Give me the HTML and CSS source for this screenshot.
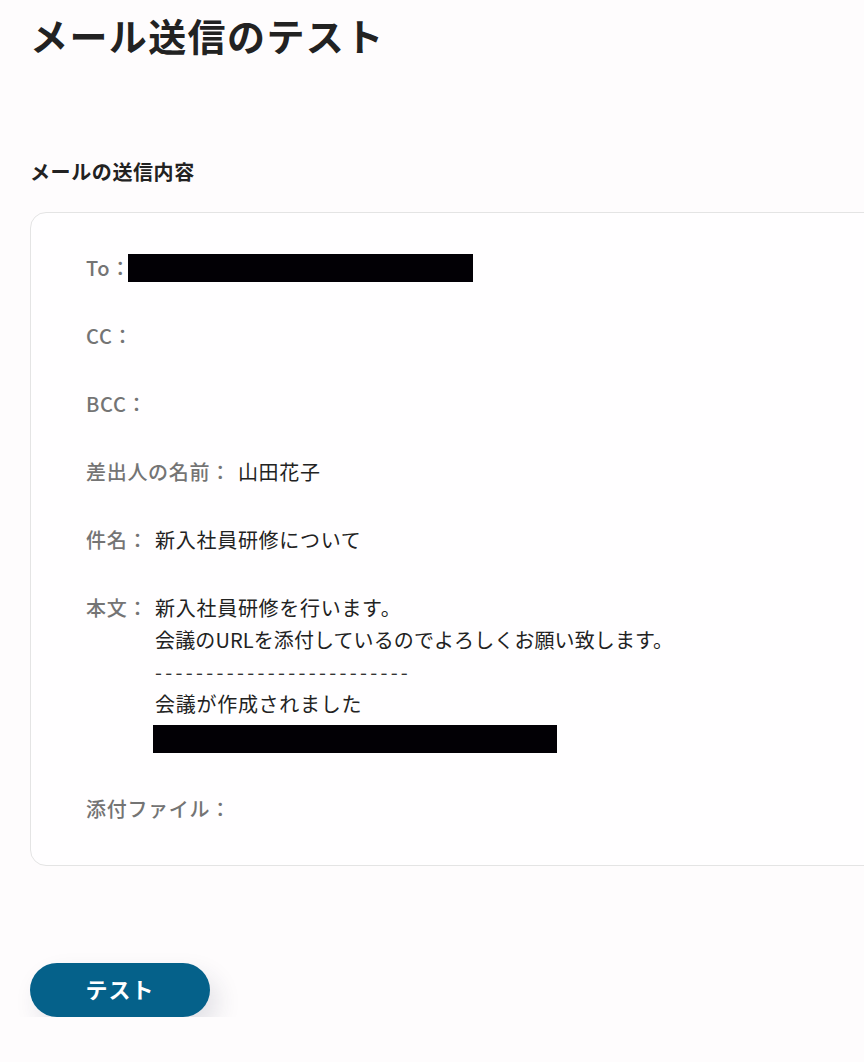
FILE: index.html
```html
<!doctype html>
<html lang="ja">
<head>
    <meta charset="UTF-8">
    <meta name="viewport" content="width=device-width, initial-scale=1.0">
    <title>メール送信のテスト</title>
    <link rel="stylesheet" href="styles.css">
</head>
<body>
    <main class="page">
        <h1 class="page-title">メール送信のテスト</h1>

        <h2 class="section-title">メールの送信内容</h2>

        <section class="mail-card">
            <div class="mail-row">
                <span class="mail-label">To：</span>
                <span class="mask mask-to"></span>
            </div>
            <div class="mail-row">
                <span class="mail-label">CC：</span>
            </div>
            <div class="mail-row">
                <span class="mail-label">BCC：</span>
            </div>
            <div class="mail-row">
                <span class="mail-label">差出人の名前：</span>
                <span class="mail-value">山田花子</span>
            </div>
            <div class="mail-row">
                <span class="mail-label">件名：</span>
                <span class="mail-value">新入社員研修について</span>
            </div>
            <div class="mail-row mail-row-body">
                <span class="mail-label">本文：</span>
                <div class="mail-value">
                    <p>新入社員研修を行います。</p>
                    <p class="tight">会議のURLを添付しているのでよろしくお願い致します。</p>
                    <p class="dashes">-------------------------</p>
                    <p>会議が作成されました</p>
                    <p><span class="mask mask-url"></span></p>
                </div>
            </div>
            <div class="mail-row">
                <span class="mail-label">添付ファイル：</span>
            </div>
        </section>

        <button type="button" class="test-button">テスト</button>
    </main>
</body>
</html>
```

FILE: styles.css
```css
html, body {
    margin: 0;
    padding: 0;
    background-color: #fefcfd;
    overflow-x: hidden;
}

body {
    font-family: "Noto Sans CJK JP", "Noto Sans", sans-serif;
    color: #222222;
}

.page {
    padding: 0 30px;
}

.page-title {
    margin: 8px 0 0;
    font-size: 38px;
    line-height: 54px;
    font-weight: 700;
    letter-spacing: 1.4px;
    color: #222222;
}

.section-title {
    margin: 96px 0 0;
    font-size: 20px;
    line-height: 28px;
    font-weight: 700;
    letter-spacing: 0.6px;
    color: #222222;
}

.mail-card {
    margin: 26px -60px 0 0;
    padding: 39px 56px 40px 55px;
    border: 1px solid #e4e4e4;
    border-radius: 16px;
    background-color: #fffeff;
    display: flex;
    flex-direction: column;
    gap: 36px;
}

.mail-row {
    display: flex;
    align-items: flex-start;
    gap: 7px;
    font-size: 20px;
    line-height: 32px;
    letter-spacing: 0.7px;
}

.mail-row-body {
    margin-bottom: 4px;
}

.mail-label {
    color: #747474;
    font-weight: 500;
    white-space: nowrap;
}

.mail-value {
    color: #222222;
}

.mail-value p {
    margin: 0;
}

.mail-value .tight {
    letter-spacing: 0.1px;
}

.dashes {
    letter-spacing: 3.3px;
    color: #333333;
}

.mask {
    display: inline-block;
    height: 28px;
    background-color: #020005;
    vertical-align: middle;
}

.mask-to {
    width: 345px;
    margin-top: 2px;
    margin-left: -10px;
}

.mask-url {
    width: 404px;
    margin-left: -2px;
}

.test-button {
    display: block;
    margin-top: 97px;
    width: 180px;
    height: 54px;
    padding: 0 0 4px;
    border: none;
    border-radius: 27px;
    background-color: #05618a;
    color: #ffffff;
    font-family: "Noto Sans CJK JP", "Noto Sans", sans-serif;
    font-size: 22px;
    line-height: 1;
    font-weight: 700;
    letter-spacing: 1px;
    box-shadow: 8px 12px 24px rgba(40, 50, 80, 0.13);
    cursor: pointer;
}
```
